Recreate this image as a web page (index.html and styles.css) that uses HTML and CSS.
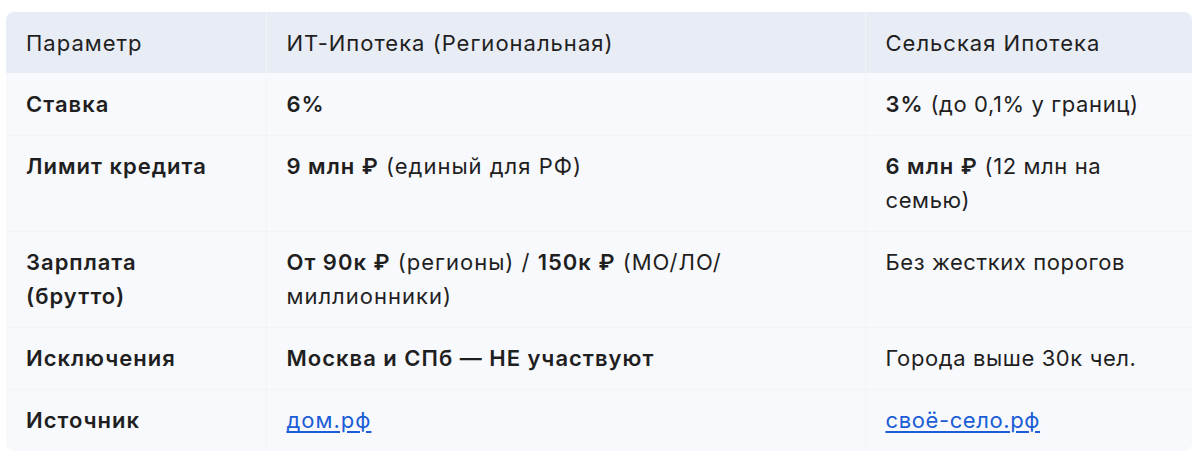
FILE: index.html
```html
<!DOCTYPE html>
<html lang="ru">
<head>
<meta charset="utf-8">
<title>Сравнение ипотек</title>
<link rel="stylesheet" href="styles.css">
</head>
<body>
<div class="table-wrap">
  <table class="cmp">
    <colgroup>
      <col class="c1"><col class="c2"><col class="c3">
    </colgroup>
    <thead>
      <tr>
        <th>Параметр</th>
        <th>ИТ-Ипотека (Региональная)</th>
        <th>Сельская Ипотека</th>
      </tr>
    </thead>
    <tbody>
      <tr>
        <td><b>Ставка</b></td>
        <td><b>6%</b></td>
        <td><b>3%</b> (до 0,1% у границ)</td>
      </tr>
      <tr>
        <td><b>Лимит кредита</b></td>
        <td><b>9 млн ₽</b> (единый для РФ)</td>
        <td><b>6 млн ₽</b> (12 млн на семью)</td>
      </tr>
      <tr>
        <td><b>Зарплата (брутто)</b></td>
        <td><b>От 90к ₽</b> (регионы) / <b>150к ₽</b> (МО/ЛО/<wbr>миллионники)</td>
        <td>Без жестких порогов</td>
      </tr>
      <tr>
        <td><b>Исключения</b></td>
        <td><b>Москва и СПб — НЕ участвуют</b></td>
        <td>Города выше 30к чел.</td>
      </tr>
      <tr>
        <td><b>Источник</b></td>
        <td><a href="#">дом.рф</a></td>
        <td><a href="#">своё-село.рф</a></td>
      </tr>
    </tbody>
  </table>
</div>
</body>
</html>
```
FILE: styles.css
```css
html, body {
  margin: 0;
  padding: 0;
  background: #ffffff;
}

body {
  font-family: "Google Sans", Inter, Roboto, "Noto Sans", sans-serif;
  color: #1f1f1f;
  font-size: 22px;
  line-height: 34px;
  letter-spacing: 1px;
}

.table-wrap {
  margin: 12px 0 0 6px;
  width: 1186px;
  border-radius: 8px;
  overflow: hidden;
  background: #f8f9fc;
}

.cmp {
  width: 100%;
  border-collapse: collapse;
  table-layout: fixed;
}

.c1 { width: 260px; }
.c2 { width: 599px; }
.c3 { width: 327px; }

.cmp th,
.cmp td {
  text-align: left;
  vertical-align: top;
  padding: 14px 36px 14px 20px;
}

.cmp th {
  font-weight: 400;
  background: #e8ecf4;
  padding-bottom: 13px;
}

.cmp td + td,
.cmp th + th {
  border-left: 1px solid #f2f4f8;
}

.cmp tbody tr + tr td {
  border-top: 1px solid #f2f4f8;
  padding-top: 13px;
}

.cmp td:last-child {
  letter-spacing: 0.6px;
}

.cmp td:last-child b {
  letter-spacing: 1px;
}

.cmp b {
  font-weight: 600;
}

.cmp a {
  color: #1a5dd6;
  text-decoration: underline;
  text-underline-offset: 3px;
}
```
